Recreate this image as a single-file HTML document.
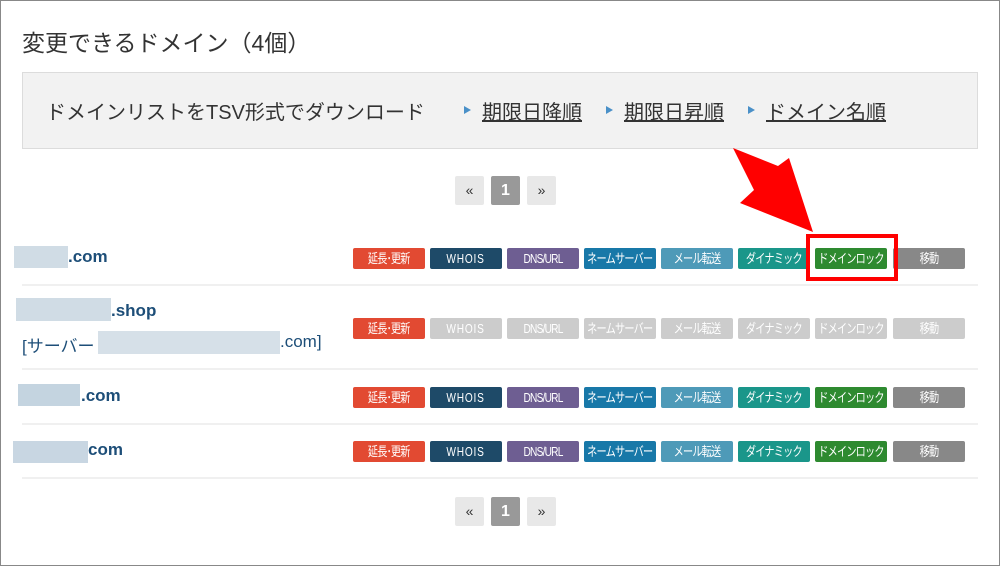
<!DOCTYPE html>
<html><head><meta charset="utf-8"><style>
*{margin:0;padding:0;box-sizing:border-box}
body{width:1000px;height:566px;position:relative;background:#fff;font-family:"Liberation Sans","Noto Sans CJK JP",sans-serif;overflow:hidden}
.frame{position:absolute;left:0;top:0;width:1000px;height:566px;border:1px solid #888}
.a{position:absolute;white-space:nowrap}
.box{position:absolute;left:22px;top:72px;width:956px;height:77px;background:#f2f2f2;border:1px solid #dcdcdc}
.lnk{position:absolute;top:96px;font-size:20px;color:#333;text-decoration:underline;white-space:nowrap}
.tri{position:absolute;top:106px;width:0;height:0;border-left:7px solid #4a90c8;border-top:4.5px solid transparent;border-bottom:4.5px solid transparent}
.pg{position:absolute;width:29px;height:29px;background:#e8e8e8;border-radius:2px;font-size:14px;color:#333;text-align:center;line-height:29px}
.pg.on{background:#999;color:#fff;font-weight:bold;font-size:16px}
.sep{position:absolute;left:22px;width:956px;height:2px;background:#f0f0f0}
.btn{position:absolute;width:72px;height:21px;border-radius:2px;color:#fff;font-size:13px;text-align:center;line-height:21px;letter-spacing:-1px;overflow:hidden;white-space:nowrap}
.btn span{display:inline-block;transform:scaleX(0.78);transform-origin:center;margin:0 -20px}
.blur{position:absolute;background:#d0dce5}
.dom{position:absolute;font-size:17px;font-weight:bold;color:#1d4e78}
</style></head><body>
<div class="frame"></div>
<div class="a" style="left:22px;top:24px;font-size:23px;color:#333">変更できるドメイン（4個）</div>
<div class="box"></div>
<div class="a" style="left:46px;top:96px;font-size:20px;color:#333">ドメインリストをTSV形式でダウンロード</div>
<div class="tri" style="left:464px"></div><div class="lnk" style="left:482px">期限日降順</div>
<div class="tri" style="left:606px"></div><div class="lnk" style="left:624px">期限日昇順</div>
<div class="tri" style="left:748px"></div><div class="lnk" style="left:766px">ドメイン名順</div>

<div class="pg" style="left:455px;top:176px">«</div><div class="pg on" style="left:491px;top:176px">1</div><div class="pg" style="left:527px;top:176px">»</div>
<div class="pg" style="left:455px;top:497px">«</div><div class="pg on" style="left:491px;top:497px">1</div><div class="pg" style="left:527px;top:497px">»</div>

<div class="sep" style="top:284px"></div>
<div class="sep" style="top:368px"></div>
<div class="sep" style="top:423px"></div>
<div class="sep" style="top:477px"></div>

<div class="blur" style="left:14px;top:246px;width:54px;height:22px"></div>
<div class="dom" style="left:68px;top:247px">.com</div>
<div class="blur" style="left:16px;top:298px;width:95px;height:23px"></div>
<div class="dom" style="left:111px;top:301px">.shop</div>
<div class="a" style="left:22px;top:332px;font-size:17px;color:#1d4e78">[サーバー</div>
<div class="blur" style="left:98px;top:331px;width:182px;height:23px;background:#d6e0e8"></div>
<div class="a" style="left:280px;top:332px;font-size:17px;color:#1d4e78">.com]</div>
<div class="blur" style="left:18px;top:384px;width:62px;height:22px;background:#c4d4e0"></div>
<div class="dom" style="left:81px;top:386px">.com</div>
<div class="blur" style="left:13px;top:441px;width:75px;height:22px;background:#c8d6e2"></div>
<div class="dom" style="left:88px;top:440px">com</div>

<div style="position:absolute;left:0;top:248px">
<div class="btn" style="left:353px;background:#e24a32"><span>延長･更新</span></div>
<div class="btn" style="left:430px;background:#1e4a68;letter-spacing:1px"><span>WHOIS</span></div>
<div class="btn" style="left:507px;background:#6e5e92"><span>DNS/URL</span></div>
<div class="btn" style="left:584px;background:#1878a8"><span>ネームサーバー</span></div>
<div class="btn" style="left:661px;background:#4e9ab8"><span>メール転送</span></div>
<div class="btn" style="left:738px;background:#1a968a"><span>ダイナミック</span></div>
<div class="btn" style="left:815px;background:#2e8a30"><span>ドメインロック</span></div>
<div class="btn" style="left:893px;background:#888"><span>移動</span></div>
</div>
<div style="position:absolute;left:0;top:318px">
<div class="btn" style="left:353px;background:#e24a32"><span>延長･更新</span></div>
<div class="btn" style="left:430px;background:#ccc;letter-spacing:1px"><span>WHOIS</span></div>
<div class="btn" style="left:507px;background:#ccc"><span>DNS/URL</span></div>
<div class="btn" style="left:584px;background:#ccc"><span>ネームサーバー</span></div>
<div class="btn" style="left:661px;background:#ccc"><span>メール転送</span></div>
<div class="btn" style="left:738px;background:#ccc"><span>ダイナミック</span></div>
<div class="btn" style="left:815px;background:#ccc"><span>ドメインロック</span></div>
<div class="btn" style="left:893px;background:#ccc"><span>移動</span></div>
</div>
<div style="position:absolute;left:0;top:387px">
<div class="btn" style="left:353px;background:#e24a32"><span>延長･更新</span></div>
<div class="btn" style="left:430px;background:#1e4a68;letter-spacing:1px"><span>WHOIS</span></div>
<div class="btn" style="left:507px;background:#6e5e92"><span>DNS/URL</span></div>
<div class="btn" style="left:584px;background:#1878a8"><span>ネームサーバー</span></div>
<div class="btn" style="left:661px;background:#4e9ab8"><span>メール転送</span></div>
<div class="btn" style="left:738px;background:#1a968a"><span>ダイナミック</span></div>
<div class="btn" style="left:815px;background:#2e8a30"><span>ドメインロック</span></div>
<div class="btn" style="left:893px;background:#888"><span>移動</span></div>
</div>
<div style="position:absolute;left:0;top:441px">
<div class="btn" style="left:353px;background:#e24a32"><span>延長･更新</span></div>
<div class="btn" style="left:430px;background:#1e4a68;letter-spacing:1px"><span>WHOIS</span></div>
<div class="btn" style="left:507px;background:#6e5e92"><span>DNS/URL</span></div>
<div class="btn" style="left:584px;background:#1878a8"><span>ネームサーバー</span></div>
<div class="btn" style="left:661px;background:#4e9ab8"><span>メール転送</span></div>
<div class="btn" style="left:738px;background:#1a968a"><span>ダイナミック</span></div>
<div class="btn" style="left:815px;background:#2e8a30"><span>ドメインロック</span></div>
<div class="btn" style="left:893px;background:#888"><span>移動</span></div>
</div>

<div style="position:absolute;left:806px;top:234px;width:92px;height:47px;border:4px solid #f00"></div>
<svg style="position:absolute;left:0;top:0" width="1000" height="566"><polygon points="733,148 778,166 789,158 813,232 740,203 754,190" fill="#f00"/></svg>
</body></html>
